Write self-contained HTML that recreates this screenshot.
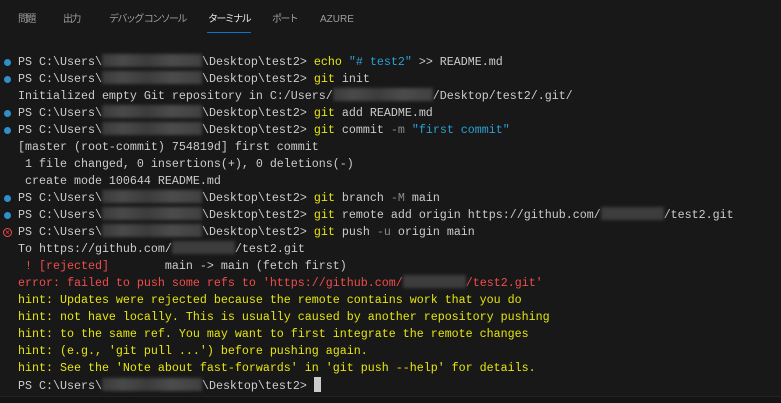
<!DOCTYPE html>
<html><head><meta charset="utf-8"><style>
html,body{margin:0;padding:0;background:#181818;width:781px;height:402px;overflow:hidden;}
.tabs{position:absolute;top:0;left:0;width:781px;height:40px;font-family:"Liberation Sans","Noto Sans CJK JP",sans-serif;font-size:10px;color:#9d9d9d;white-space:nowrap;}
.tabs span{position:absolute;top:13px;line-height:14px;}
.j{letter-spacing:-1.6px;}
.ul{position:absolute;left:207px;top:32px;width:44px;height:1px;background:#0078d4;}
.term{position:absolute;left:0;top:54px;font-family:"Liberation Mono",monospace;font-size:11.67px;line-height:17px;color:#cccccc;}
.l{position:relative;padding-left:18px;height:17px;white-space:pre;}
.d{position:absolute;left:4px;top:5px;width:7px;height:7px;border-radius:50%;background:#2f8fc8;}
.x{position:absolute;left:3px;top:4px;width:7px;height:7px;border-radius:50%;border:1px solid #f14c4c;color:#f14c4c;font-size:8px;line-height:7px;text-align:center;font-family:"Liberation Sans",sans-serif;font-style:normal;}
.b{display:inline-block;width:100px;height:13px;vertical-align:-2px;background:linear-gradient(90deg,#3a3a3a,#4a4a4a 20%,#3c3c3c 45%,#4c4c4c 70%,#404040);filter:blur(1.5px);}
.bs{display:inline-block;width:63px;height:13px;vertical-align:-2px;background:#3d3d3d;filter:blur(1.5px);}
.y{color:#e5e510}.c{color:#2b9fd6}.r{color:#f14c4c}.g{color:#8a8a8a}
.cur{display:inline-block;width:7px;height:15px;background:#cccccc;vertical-align:-3px;}
.bot{position:absolute;left:0;top:396px;width:781px;height:6px;background:#141414;border-top:1px solid #232323;}
</style></head><body>
<div class="tabs"><span class="j" style="left:18px">問題</span><span class="j" style="left:63px">出力</span><span class="j" style="left:109px">デバッグ コンソール</span><span class="j" style="left:208px;color:#e7e7e7">ターミナル</span><span class="j" style="left:272px">ポート</span><span style="left:320px">AZURE</span></div>
<div class="ul"></div>
<div class="term"><div class="l"><i class="d"></i>PS C:\Users\<span class="b"></span>\Desktop\test2&gt; <span class="y">echo</span> <span class="c">"# test2"</span> &gt;&gt; README.md</div><div class="l"><i class="d"></i>PS C:\Users\<span class="b"></span>\Desktop\test2&gt; <span class="y">git</span> init</div><div class="l">Initialized empty Git repository in C:/Users/<span class="b"></span>/Desktop/test2/.git/</div><div class="l"><i class="d"></i>PS C:\Users\<span class="b"></span>\Desktop\test2&gt; <span class="y">git</span> add README.md</div><div class="l"><i class="d"></i>PS C:\Users\<span class="b"></span>\Desktop\test2&gt; <span class="y">git</span> commit <span class="g">-m</span> <span class="c">"first commit"</span></div><div class="l">[master (root-commit) 754819d] first commit</div><div class="l"> 1 file changed, 0 insertions(+), 0 deletions(-)</div><div class="l"> create mode 100644 README.md</div><div class="l"><i class="d"></i>PS C:\Users\<span class="b"></span>\Desktop\test2&gt; <span class="y">git</span> branch <span class="g">-M</span> main</div><div class="l"><i class="d"></i>PS C:\Users\<span class="b"></span>\Desktop\test2&gt; <span class="y">git</span> remote add origin https://github.com/<span class="bs"></span>/test2.git</div><div class="l"><i class="x">×</i>PS C:\Users\<span class="b"></span>\Desktop\test2&gt; <span class="y">git</span> push <span class="g">-u</span> origin main</div><div class="l">To https://github.com/<span class="bs"></span>/test2.git</div><div class="l"> <span class="r">! [rejected]</span>        main -&gt; main (fetch first)</div><div class="l r">error: failed to push some refs to 'https://github.com/<span class="bs"></span>/test2.git'</div><div class="l y">hint: Updates were rejected because the remote contains work that you do</div><div class="l y">hint: not have locally. This is usually caused by another repository pushing</div><div class="l y">hint: to the same ref. You may want to first integrate the remote changes</div><div class="l y">hint: (e.g., 'git pull ...') before pushing again.</div><div class="l y">hint: See the 'Note about fast-forwards' in 'git push --help' for details.</div><div class="l">PS C:\Users\<span class="b"></span>\Desktop\test2&gt; <span class="cur"></span></div></div>
<div class="bot"></div>
</body></html>
